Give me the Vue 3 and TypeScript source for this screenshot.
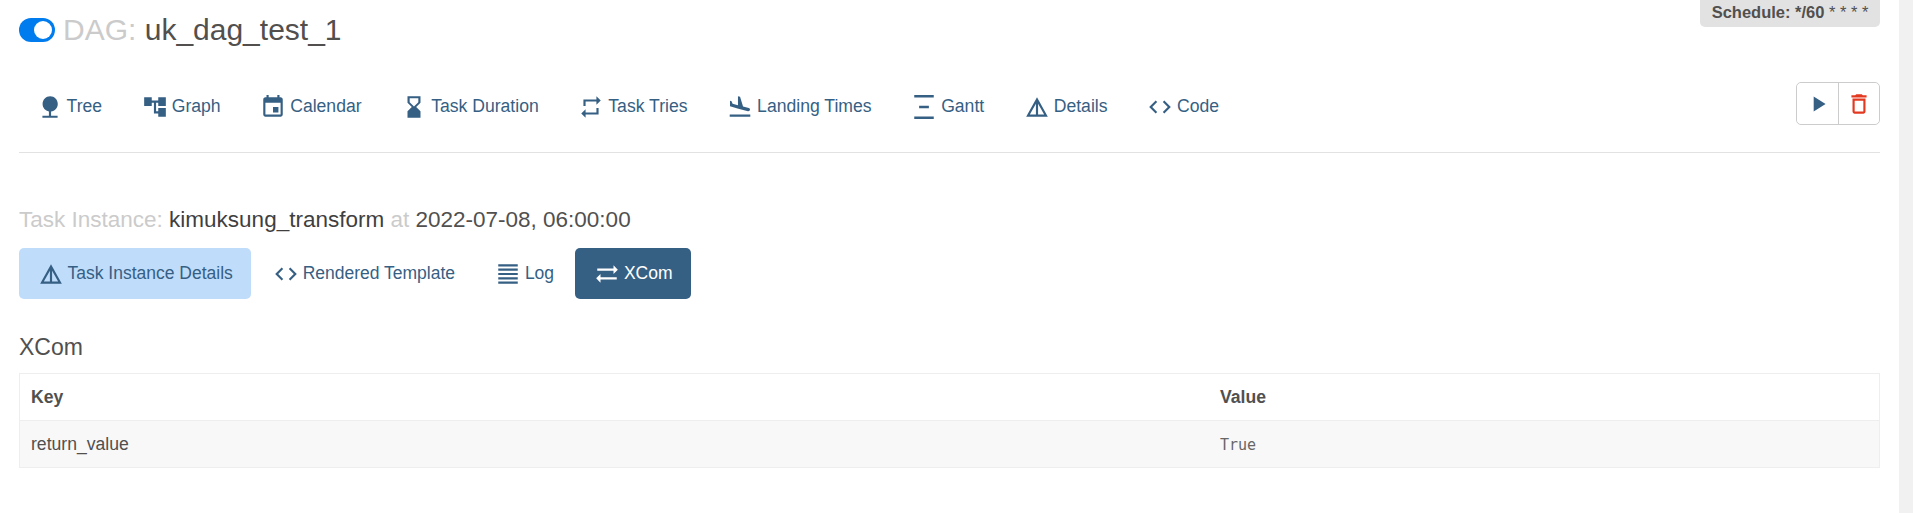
<script setup lang="ts">
interface INavItem {
  label: string;
  icon: string;
  iconClass?: string;
}

const navItems: INavItem[] = [
  { label: 'Tree', icon: 'M13 16.12c3.47-.41 6.17-3.36 6.17-6.95 0-3.87-3.13-7-7-7s-7 3.13-7 7c0 3.47 2.52 6.34 5.83 6.89V20H5v2h14v-2h-6v-3.88z' },
  { label: 'Graph', icon: 'M22 11V3h-7v3H9V3H2v8h7V8h2v10h4v3h7v-8h-7v3h-2V8h2v3z' },
  { label: 'Calendar', icon: 'M17 12h-5v5h5v-5zM16 1v2H8V1H6v2H5c-1.11 0-1.99.9-1.99 2L3 19c0 1.1.89 2 2 2h14c1.1 0 2-.9 2-2V5c0-1.1-.9-2-2-2h-1V1h-2zm3 18H5V8h14v11z' },
  { label: 'Task Duration', icon: 'M18 22l-.01-6L14 12l3.99-4.01L18 2H6v6l4 4-4 3.99V22h12zM8 7.5V4h8v3.5l-4 4-4-4z' },
  { label: 'Task Tries', icon: 'M7 7h10v3l4-4-4-4v3H5v6h2V7zm10 10H7v-3l-4 4 4 4v-3h12v-6h-2v4z' },
  { label: 'Landing Times', icon: 'M2.5 19h19v2h-19zm7.18-5.73l4.35 1.16 5.31 1.42c.8.21 1.62-.26 1.84-1.06.21-.8-.26-1.62-1.06-1.84l-5.31-1.42-2.76-9.02L10.12 2v8.28L5.15 8.95l-.93-2.32-1.45-.39v5.17l1.6.43 5.31 1.43z' },
  { label: 'Gantt', icon: 'M3 1h18v2.2H3zM7.5 10.8h9v2.4h-9zM3 20.8h18V23H3z' },
  { label: 'Details', icon: 'M12 3 2 21h20L12 3zm1 5.92L18.6 19H13V8.92zm-2 0V19H5.4L11 8.92z' },
  { label: 'Code', icon: 'M9.4 16.6L4.8 12l4.6-4.6L8 6l-6 6 6 6 1.4-1.4zm5.2 0l4.6-4.6-4.6-4.6L16 6l6 6-6 6-1.4-1.4z' },
];

const taskTabs: INavItem[] = [
  { label: 'Task Instance Details', icon: 'M12 3 2 21h20L12 3zm1 5.92L18.6 19H13V8.92zm-2 0V19H5.4L11 8.92z', iconClass: 'current' },
  { label: 'Rendered Template', icon: 'M9.4 16.6L4.8 12l4.6-4.6L8 6l-6 6 6 6 1.4-1.4zm5.2 0l4.6-4.6-4.6-4.6L16 6l6 6-6 6-1.4-1.4z' },
  { label: 'Log', icon: 'M3 21h18v-2H3v2zm0-4h18v-2H3v2zm0-4h18v-2H3v2zm0-4h18V7H3v2zm0-6v2h18V3H3z' },
  { label: 'XCom', icon: 'M22 8l-4-4v3H3v2h15v3l4-4zM2 16l4 4v-3h15v-2H6v-3l-4 4z', iconClass: 'active' },
];
</script>

<template>
  <div class="page">
    <main class="content">
      <header class="title-row">
        <h3 class="dag-title">
          <span class="toggle"><span class="knob" /></span>
          <span><span class="muted">DAG:</span> uk_dag_test_1</span>
        </h3>
        <span class="schedule"><b>Schedule: */60</b> * * * *</span>
      </header>

      <div class="nav-row">
        <nav class="pills">
          <a v-for="item in navItems" :key="item.label" class="pill">
            <svg class="icon" viewBox="0 0 24 24"><path :d="item.icon" /></svg>
            {{ item.label }}
          </a>
        </nav>
        <div class="actions">
          <button class="action">
            <svg class="icon" viewBox="0 0 24 24"><path d="M8 5v14l11-7z" /></svg>
          </button>
          <button class="action danger">
            <svg class="icon" viewBox="0 0 24 24"><path d="M6 19c0 1.1.9 2 2 2h8c1.1 0 2-.9 2-2V7H6v12zM8 9h8v10H8V9zm7.5-5l-1-1h-5l-1 1H5v2h14V4h-3.5z" /></svg>
          </button>
        </div>
      </div>

      <hr class="divider" />

      <h4 class="task-title">
        <span class="muted">Task Instance:</span> <span class="dark">kimuksung_transform</span> <span class="muted">at</span> 2022-07-08, 06:00:00
      </h4>

      <nav class="pills tabs">
        <a v-for="tab in taskTabs" :key="tab.label" class="pill" :class="tab.iconClass">
          <svg class="icon" viewBox="0 0 24 24"><path :d="tab.icon" /></svg>
          {{ tab.label }}
        </a>
      </nav>

      <h4 class="section-title">XCom</h4>

      <table class="xcom-table">
        <thead>
          <tr>
            <th class="key-col">Key</th>
            <th>Value</th>
          </tr>
        </thead>
        <tbody>
          <tr>
            <td>return_value</td>
            <td><code>True</code></td>
          </tr>
        </tbody>
      </table>
    </main>
    <div class="scroll-track" />
  </div>
</template>

<style>
html,
body {
  margin: 0;
  overflow: hidden;
  background: #fff;
}
</style>

<style scoped>
.page {
  display: flex;
  height: 513px;
  overflow: hidden;
  font-family: 'Liberation Sans', Arial, sans-serif;
  font-size: 17.6px;
  color: #51504f;
}
.content {
  flex: 1;
  min-width: 0;
  padding: 0 19px;
}
.scroll-track {
  width: 14px;
  background: #f1f1f1;
}
.title-row {
  display: flex;
  justify-content: space-between;
  align-items: flex-start;
  height: 83px;
}
.dag-title {
  margin: 12px 0 0;
  display: flex;
  align-items: center;
  gap: 8px;
  font-size: 30px;
  line-height: 36px;
  font-weight: 400;
  white-space: nowrap;
}
.muted {
  color: #cbcbcb;
}
.dark {
  color: #3f3f3f;
}
.toggle {
  display: inline-flex;
  align-items: center;
  justify-content: flex-end;
  width: 36px;
  height: 24px;
  padding: 0 3px;
  box-sizing: border-box;
  border-radius: 12px;
  background: #017cee;
}
.knob {
  width: 18px;
  height: 18px;
  border-radius: 50%;
  background: #fff;
}
.schedule {
  margin-top: -4px;
  padding: 6px 11.5px 5px;
  border-radius: 5px;
  background: #e2e2e2;
  font-size: 16.5px;
  line-height: 20px;
}
.nav-row {
  display: flex;
  justify-content: space-between;
  align-items: flex-start;
  height: 46px;
}
.pills {
  display: flex;
  gap: 4.4px;
}
.pill {
  display: flex;
  align-items: center;
  gap: 4px;
  height: 47px;
  padding: 0 17.6px;
  box-sizing: border-box;
  border-radius: 5px;
  color: #365f84;
  white-space: nowrap;
}
.pill.current {
  background: #bfdcfb;
}
.pill.active {
  background: #365f84;
  color: #fff;
}
.icon {
  width: 26px;
  height: 26px;
  fill: currentColor;
  flex: none;
}
.actions {
  display: flex;
  height: 43px;
  margin-top: -1px;
  border: 1px solid #ccc;
  border-radius: 5px;
  box-sizing: border-box;
}
.action {
  width: 41px;
  padding: 0;
  display: flex;
  align-items: center;
  justify-content: center;
  background: #fff;
  border: 0;
  border-radius: 5px;
  color: #365f84;
}
.action + .action {
  border-left: 1px solid #ccc;
  border-radius: 0 5px 5px 0;
}
.action.danger {
  color: #e43921;
}
.divider {
  margin: 23px 0 0;
  border: 0;
  border-top: 1px solid #e2e2e2;
}
.task-title {
  margin: 54px 0 0;
  font-size: 22.5px;
  line-height: 26px;
  font-weight: 400;
}
.tabs {
  margin-top: 15px;
  gap: 2.8px;
}
.tabs .pill {
  height: 51px;
  padding: 0 18.5px;
  font-size: 17.5px;
}
.section-title {
  margin: 34px 0 0;
  font-size: 23px;
  line-height: 28px;
  font-weight: 400;
}
.xcom-table {
  width: 100%;
  margin-top: 12px;
  border-collapse: collapse;
  border: 1px solid #eee;
  table-layout: fixed;
  line-height: 24px;
}
.xcom-table th,
.xcom-table td {
  padding: 11px;
  text-align: left;
  border-top: 1px solid #eee;
}
.xcom-table th {
  font-weight: 700;
}
.key-col {
  width: 1167px;
}
.xcom-table tbody tr {
  background: #f8f8f8;
}
code {
  font-family: 'DejaVu Sans Mono', monospace;
  font-size: 15px;
  line-height: 1;
  color: #666;
}
</style>
